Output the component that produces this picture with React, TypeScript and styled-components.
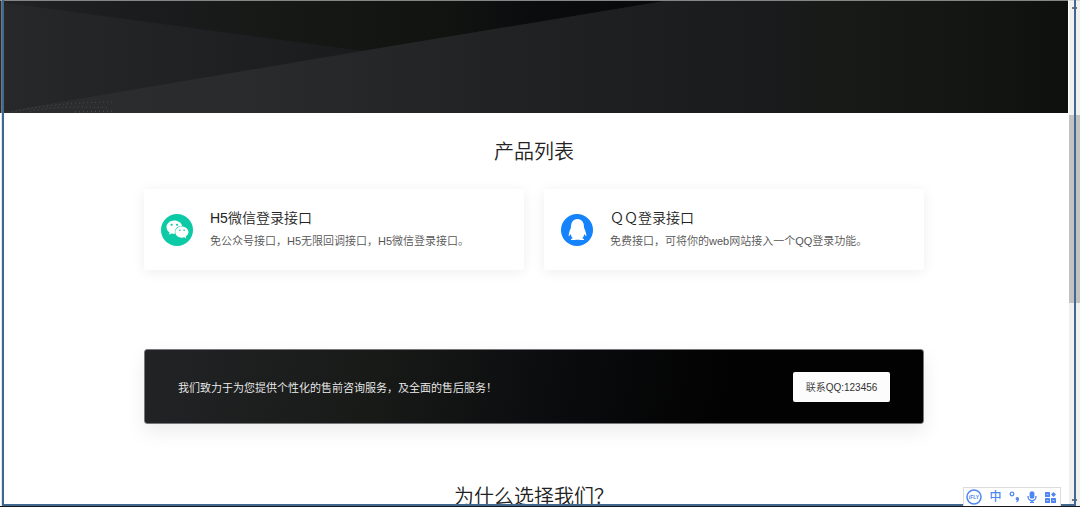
import React from "react";
import styled, { createGlobalStyle } from "styled-components";
import { FaQq, FaWeixin } from "react-icons/fa";

const GlobalStyle = createGlobalStyle`
  *, *::before, *::after { box-sizing: border-box; }
  body {
    margin: 0;
    background: #fff;
    color: #222;
    font-family: "Liberation Sans", "Noto Sans CJK SC", sans-serif;
    font-size: 11px;
    font-weight: 350;
  }
  h2, h3, p { margin: 0; font-weight: 350; }
`;

const Window = styled.div`
  position: relative;
  display: flex;
  height: 100vh;
  overflow: hidden;
  border-bottom: 1px solid #15171c;
`;

const Page = styled.main`
  flex: 1;
  min-width: 0;
  overflow: hidden;
`;

const Hero = styled.header`
  height: 113px;
  border-top: 1px solid #858786;
  background: #1b1c1e;
`;

const HeroArt = styled.svg`
  display: block;
  width: 100%;
  height: 100%;
`;

const Container = styled.div`
  max-width: 780px;
  margin: 0 auto;
`;

const SectionTitle = styled.h2`
  font-size: 20px;
  line-height: 30px;
  text-align: center;
`;

const Products = styled.section`
  padding: 24px 0 79px;
`;

const CardGrid = styled.div`
  display: grid;
  grid-template-columns: 1fr 1fr;
  gap: 20px;
  margin-top: 22px;
`;

const Card = styled.article`
  display: flex;
  align-items: center;
  gap: 17px;
  height: 81px;
  padding: 0 17px;
  border-radius: 2px;
  background: #fff;
  box-shadow: 0 2px 14px rgba(0, 0, 0, 0.07);
`;

const Badge = styled.span<{ $color: string }>`
  display: grid;
  place-items: center;
  flex: none;
  width: 32px;
  height: 32px;
  border-radius: 50%;
  background: ${(p) => p.$color};
  color: #fff;
`;

const CardBody = styled.div`
  padding-bottom: 2px;
`;

const CardTitle = styled.h3`
  font-size: 14px;
  line-height: 24px;
`;

const CardText = styled.p`
  line-height: 22px;
  color: #555;
`;

const Banner = styled.section`
  display: flex;
  align-items: center;
  justify-content: space-between;
  height: 75px;
  padding: 0 33px;
  border: 1px solid #77777c;
  border-width: 1px 1px;
  border-radius: 3px;
  background: linear-gradient(100deg, #222325 0%, #181a18 30%, #0b0c0e 52%, #020202 75%, #020202 100%);
  box-shadow: 0 8px 20px rgba(0, 0, 0, 0.08);
  color: #f0f0f0;
`;

const ContactButton = styled.button`
  width: 97px;
  height: 30px;
  padding: 0;
  border: 0;
  border-radius: 2px;
  background: #fcfcfc;
  color: #333;
  font: inherit;
  font-size: 10px;
`;

const Reasons = styled.section`
  padding-top: 58px;
`;

const ScrollTrack = styled.div`
  display: flex;
  flex-direction: column;
  align-items: center;
  flex: none;
  width: 12px;
  padding: 6px 0 5px;
  border-top: 1px solid #d8d8d8;
  border-left: 1px solid #fff;
  background: #f0f0f0;
`;

const ScrollArrow = styled.span`
  width: 5px;
  height: 2px;
  background: #707680;
`;

const ScrollSpace = styled.span<{ $grow: number }>`
  flex: ${(p) => p.$grow} 1 0;
`;

const ScrollThumb = styled.span`
  flex: 187 1 0;
  width: 100%;
  background: #c2c2c2;
`;

const SelectionFrame = styled.div`
  position: absolute;
  inset: 0 4px 0 2px;
  border: solid #43688f;
  border-width: 0 2px 2px;
  box-shadow: -1px 0 0 rgba(185, 201, 217, 0.5);
  pointer-events: none;
`;

const InputBar = styled.div`
  position: absolute;
  right: 19px;
  bottom: -1px;
  display: flex;
  align-items: center;
  justify-content: space-between;
  width: 98px;
  height: 20px;
  padding: 0 4px 0 2px;
  border: 1px solid #dcdcdc;
  background: #fff;
  color: #4f86f0;
`;

const InputMode = styled.span`
  font-size: 12px;
  font-weight: 500;
  line-height: 16px;
`;

function HeroDrawing() {
  return (
    <HeroArt viewBox="0 0 1068 112" preserveAspectRatio="none" aria-hidden="true">
      <defs>
        <linearGradient id="top" gradientUnits="userSpaceOnUse" x1="0" x2="665" y1="0" y2="0">
          <stop offset="0" stopColor="#222325" />
          <stop offset="0.2" stopColor="#1b1c1e" />
          <stop offset="0.4" stopColor="#171917" />
          <stop offset="0.68" stopColor="#111311" />
          <stop offset="0.8" stopColor="#0b0c0e" />
          <stop offset="1" stopColor="#080909" />
        </linearGradient>
        <linearGradient id="left" gradientUnits="userSpaceOnUse" x1="0" x2="362" y1="0" y2="0">
          <stop offset="0" stopColor="#27282a" />
          <stop offset="1" stopColor="#1a1b1d" />
        </linearGradient>
        <linearGradient id="front" gradientUnits="userSpaceOnUse" x1="0" x2="1068" y1="0" y2="0">
          <stop offset="0" stopColor="#2c2d2f" />
          <stop offset="0.22" stopColor="#2a2b2d" />
          <stop offset="0.5" stopColor="#202123" />
          <stop offset="0.7" stopColor="#1a1b1d" />
          <stop offset="0.78" stopColor="#181a18" />
          <stop offset="0.92" stopColor="#131513" />
          <stop offset="1" stopColor="#0e100e" />
        </linearGradient>
      </defs>
      <path d="M0 0H665L362 50L0 1Z" fill="url(#top)" />
      <path d="M0 1L362 50L0 111Z" fill="url(#left)" />
      <path d="M0 111L362 50L665 0H1068V112H0Z" fill="url(#front)" />
      <path
        d="M12 111Q50 102 112 101M30 110Q65 104 108 107M75 111L114 110"
        fill="none"
        stroke="#505154"
        strokeDasharray="1 3"
      />
    </HeroArt>
  );
}

function VendorIcon() {
  return (
    <svg width="16" height="16" viewBox="0 0 16 16" aria-hidden="true">
      <circle cx="8" cy="8" r="7" fill="none" stroke="currentColor" strokeWidth="1.5" />
      <text x="8" y="10" textAnchor="middle" fontSize="5" fontWeight="700" fill="currentColor">
        iFLY
      </text>
    </svg>
  );
}

function PunctuationIcon() {
  return (
    <svg width="11" height="12" viewBox="0 0 11 12" fill="none" stroke="currentColor" aria-hidden="true">
      <circle cx="3" cy="3" r="1.8" strokeWidth="1.3" />
      <path d="M9.4 7.7c.1 1.4-.6 2.6-1.9 3.2" strokeWidth="1.2" />
      <circle cx="8.3" cy="7.7" r="1.7" fill="currentColor" stroke="none" />
    </svg>
  );
}

function MicIcon() {
  return (
    <svg width="10" height="12" viewBox="0 0 10 12" fill="none" stroke="currentColor" aria-hidden="true">
      <rect x="2.6" y="0.2" width="4.8" height="7.6" rx="2.4" fill="currentColor" stroke="none" />
      <path d="M1 5v.6a4 4 0 0 0 8 0V5M5 9.5v2M3 11.4h4" strokeWidth="1.3" />
    </svg>
  );
}

function ToolboxIcon() {
  return (
    <svg width="11" height="11" viewBox="0 0 11 11" fill="currentColor" aria-hidden="true">
      <rect width="5" height="5" rx="0.6" />
      <path d="M8.5 0L11 2.5L8.5 5L6 2.5Z" />
      <rect y="6" width="5" height="5" rx="0.6" />
      <rect x="6" y="6" width="5" height="5" rx="0.6" />
      <path d="M1.5 2.5h2M1.5 8.5h2M7.5 8.5h2" stroke="#fff" strokeWidth="0.5" />
    </svg>
  );
}

const products = [
  {
    title: "H5微信登录接口",
    text: "免公众号接口，H5无限回调接口，H5微信登录接口。",
    color: "#0dcaa7",
    icon: <FaWeixin size={23} />,
  },
  {
    title: "ＱＱ登录接口",
    text: "免费接口，可将你的web网站接入一个QQ登录功能。",
    color: "#1583fb",
    icon: <FaQq size={21} />,
  },
];

export default function App() {
  return (
    <>
      <GlobalStyle />
      <Window lang="zh-CN">
        <Page>
          <Hero>
            <HeroDrawing />
          </Hero>
          <Container>
            <Products>
              <SectionTitle>产品列表</SectionTitle>
              <CardGrid>
                {products.map((product) => (
                  <Card key={product.title}>
                    <Badge $color={product.color}>{product.icon}</Badge>
                    <CardBody>
                      <CardTitle>{product.title}</CardTitle>
                      <CardText>{product.text}</CardText>
                    </CardBody>
                  </Card>
                ))}
              </CardGrid>
            </Products>
            <Banner>
              <p>我们致力于为您提供个性化的售前咨询服务，及全面的售后服务！</p>
              <ContactButton type="button">联系QQ:123456</ContactButton>
            </Banner>
            <Reasons>
              <SectionTitle>为什么选择我们？</SectionTitle>
            </Reasons>
          </Container>
        </Page>
        <ScrollTrack aria-hidden="true">
          <ScrollArrow />
          <ScrollSpace $grow={106} />
          <ScrollThumb />
          <ScrollSpace $grow={196} />
          <ScrollArrow />
        </ScrollTrack>
        <SelectionFrame />
        <InputBar>
          <VendorIcon />
          <InputMode>中</InputMode>
          <PunctuationIcon />
          <MicIcon />
          <ToolboxIcon />
        </InputBar>
      </Window>
    </>
  );
}
